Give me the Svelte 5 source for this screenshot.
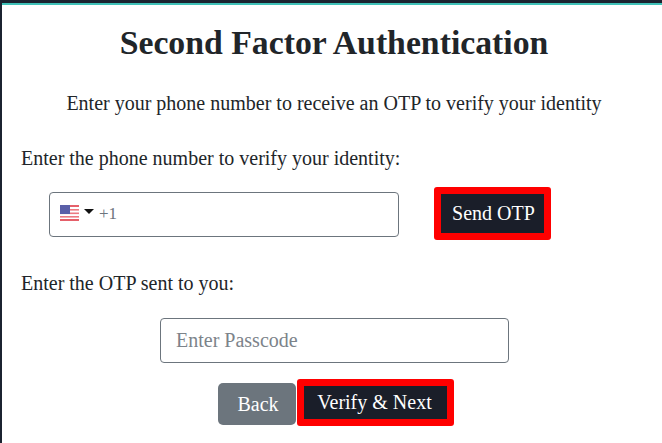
<script>
  let phone = "+1";
  let otp = "";
</script>

<div class="page">
  <h1>Second Factor Authentication</h1>
  <p class="intro">Enter your phone number to receive an OTP to verify your identity</p>

  <p class="label phone-label">Enter the phone number to verify your identity:</p>
  <div class="phone-row">
    <div class="phone-input">
      <svg class="flag" width="19" height="16" viewBox="0 0 19 16">
        <rect width="19" height="16" rx="1.5" fill="#fff" />
        <rect y="0" width="19" height="2" fill="#e5606a" />
        <rect y="4" width="19" height="1.6" fill="#ec7a82" />
        <rect y="7.5" width="19" height="1.6" fill="#ec7a82" />
        <rect y="11" width="19" height="1.6" fill="#ec7a82" />
        <rect y="14" width="19" height="2" fill="#e5606a" />
        <rect width="10" height="9" fill="#5a5fa8" />
      </svg>
      <span class="caret"></span>
      <input class="tel" bind:value={phone} />
    </div>
    <button class="dark outlined send">Send OTP</button>
  </div>

  <p class="label otp-label">Enter the OTP sent to you:</p>
  <input class="passcode" placeholder="Enter Passcode" bind:value={otp} />

  <div class="actions">
    <button class="back">Back</button>
    <button class="dark outlined verify">Verify &amp; Next</button>
  </div>
</div>

<style>
  :global(body) {
    margin: 0;
    background: #fff;
  }

  .page {
    height: 443px;
    box-sizing: border-box;
    overflow: hidden;
    border-left: 2px solid #1b2330;
    border-top: 3px solid #1b2330;
    box-shadow: inset 0 2px 0 #3fc1b8;
    display: flex;
    flex-direction: column;
    font-family: "Liberation Serif", "Times New Roman", serif;
    color: #212529;
    padding: 0 0 0 19px;
  }

  h1 {
    margin: 18px 0 0 -15px;
    font-size: 33.75px;
    line-height: 44px;
    text-align: center;
  }

  .intro {
    margin: 25px 0 0 -15px;
    font-size: 20px;
    line-height: 26px;
    text-align: center;
  }

  .label {
    margin: 0;
    font-size: 20px;
    line-height: 26px;
  }

  .phone-label {
    margin-top: 29px;
  }

  .phone-row {
    display: flex;
    align-items: flex-start;
    gap: 35px;
    margin: 16px 0 0 28px;
  }

  .phone-input {
    width: 350px;
    height: 45px;
    box-sizing: border-box;
    margin-top: 5px;
    border: 1px solid #6c757d;
    border-radius: 4px;
    display: flex;
    align-items: center;
    padding-left: 10px;
  }

  .flag {
    flex: none;
    margin-bottom: 4px;
  }

  .caret {
    margin: 0 0 7px 5px;
    border-left: 5px solid transparent;
    border-right: 5px solid transparent;
    border-top: 5px solid #111;
  }

  .tel {
    border: 0;
    outline: 0;
    padding: 0;
    margin: 0 0 2px 5px;
    min-width: 0;
    flex: 1;
    font: inherit;
    font-size: 17px;
    color: #6c757d;
    background: transparent;
  }

  button {
    font-family: inherit;
    font-size: 20px;
    color: #fff;
    border: 0;
    border-radius: 5px;
    box-sizing: border-box;
    cursor: pointer;
  }

  .dark {
    background: #1a1e29;
  }

  .outlined {
    border: 7px solid #f00;
    border-radius: 3px;
  }

  .send {
    width: 117px;
    height: 53px;
    padding: 0 0 0 2px;
  }

  .otp-label {
    margin-top: 30px;
  }

  .passcode {
    align-self: flex-start;
    width: 349px;
    height: 45px;
    box-sizing: border-box;
    margin: 22px 0 0 139px;
    padding: 0 15px;
    border: 1px solid #6c757d;
    border-radius: 4px;
    font: inherit;
    font-size: 20px;
    outline: 0;
  }

  .passcode::placeholder {
    color: #7c838a;
    opacity: 1;
  }

  .actions {
    display: flex;
    align-items: flex-start;
    gap: 1px;
    margin: 16px 0 0 197px;
  }

  .back {
    width: 78px;
    height: 42px;
    margin-top: 4px;
    padding: 0 0 0 2px;
    background: #6c757d;
  }

  .verify {
    width: 157px;
    height: 47px;
    padding: 0 2px 0 0;
  }
</style>
